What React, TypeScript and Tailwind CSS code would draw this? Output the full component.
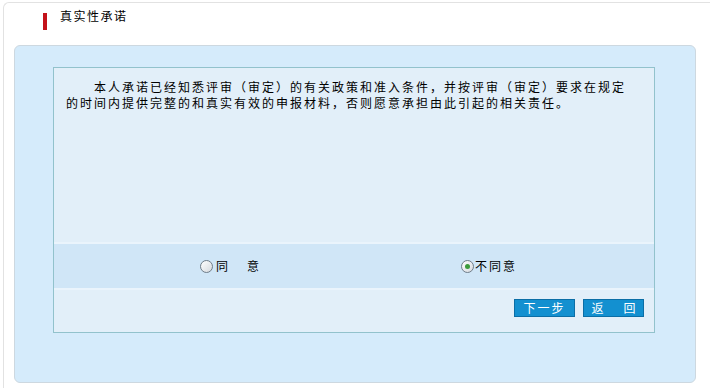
import { useState } from 'react'

const cjk = { fontFamily: '"Noto Sans CJK SC", "Liberation Sans", sans-serif' }

function Radio({ checked, onClick }: { checked: boolean; onClick: () => void }) {
  return (
    <span
      onClick={onClick}
      className="w-[13px] h-[13px] rounded-full border border-[#6f7c88] bg-gradient-to-br from-white to-[#d5d9de] flex items-center justify-center cursor-pointer"
    >
      {checked && <span className="w-[5px] h-[5px] rounded-full bg-[#3c9b3c]" />}
    </span>
  )
}

export default function App() {
  const [agree, setAgree] = useState(false)

  return (
    <div className="w-[710px] h-[388px] bg-white overflow-hidden text-black text-[12px]" style={cjk}>
      <div className="ml-[3px] mt-[2px] h-[386px] border-l border-t border-[#e2e2e2] rounded-tl-[6px]">
        {/* header */}
        <div className="h-[42px] flex items-start pl-[39px]">
          <span className="mt-[10px] w-[4px] h-[17px] bg-[#c4121a]" />
          <span className="ml-[13px] mt-[5px] leading-[16px] tracking-[1.5px]">真实性承诺</span>
        </div>

        {/* panel */}
        <div className="ml-[10px] w-[682px] h-[338px] bg-[#d5ebfb] border border-[#cdd8e0] rounded-[6px] pt-[21px] pl-[38px]">
          <div className="w-[602px] h-[266px] border border-[#92c2cc] bg-[#e2eff9] flex flex-col">
            <div className="h-[174px] pt-[11px] pl-[12px]">
              <p className="w-[566px] indent-[28px] leading-[16px] tracking-[2px]">
                本人承诺已经知悉评审（审定）的有关政策和准入条件，并按评审（审定）要求在规定的时间内提供完整的和真实有效的申报材料，否则愿意承担由此引起的相关责任。
              </p>
            </div>

            <div className="h-[48px] bg-[#d0e6f7] border-t-2 border-b-2 border-[#eaf4fc] flex items-center pl-[146px]">
              <label className="w-[261px] flex items-center">
                <Radio checked={agree} onClick={() => setAgree(true)} />
                <span className="ml-[3px]" onClick={() => setAgree(true)}>同</span>
                <span className="ml-[19px]" onClick={() => setAgree(true)}>意</span>
              </label>
              <label className="flex items-center">
                <Radio checked={!agree} onClick={() => setAgree(false)} />
                <span className="ml-[1px] tracking-[2px]" onClick={() => setAgree(false)}>不同意</span>
              </label>
            </div>

            <div className="flex-1 flex justify-end items-start pt-[9px] pr-[10px] gap-[8px]">
              <button className="w-[61px] h-[18px] bg-[#1390d0] border border-[#0b6ea6] text-white leading-[16px] tracking-[2px]">
                下一步
              </button>
              <button className="w-[61px] h-[18px] bg-[#1390d0] border border-[#0b6ea6] text-white leading-[16px]">
                返<span className="ml-[20px]">回</span>
              </button>
            </div>
          </div>
        </div>
      </div>
    </div>
  )
}
